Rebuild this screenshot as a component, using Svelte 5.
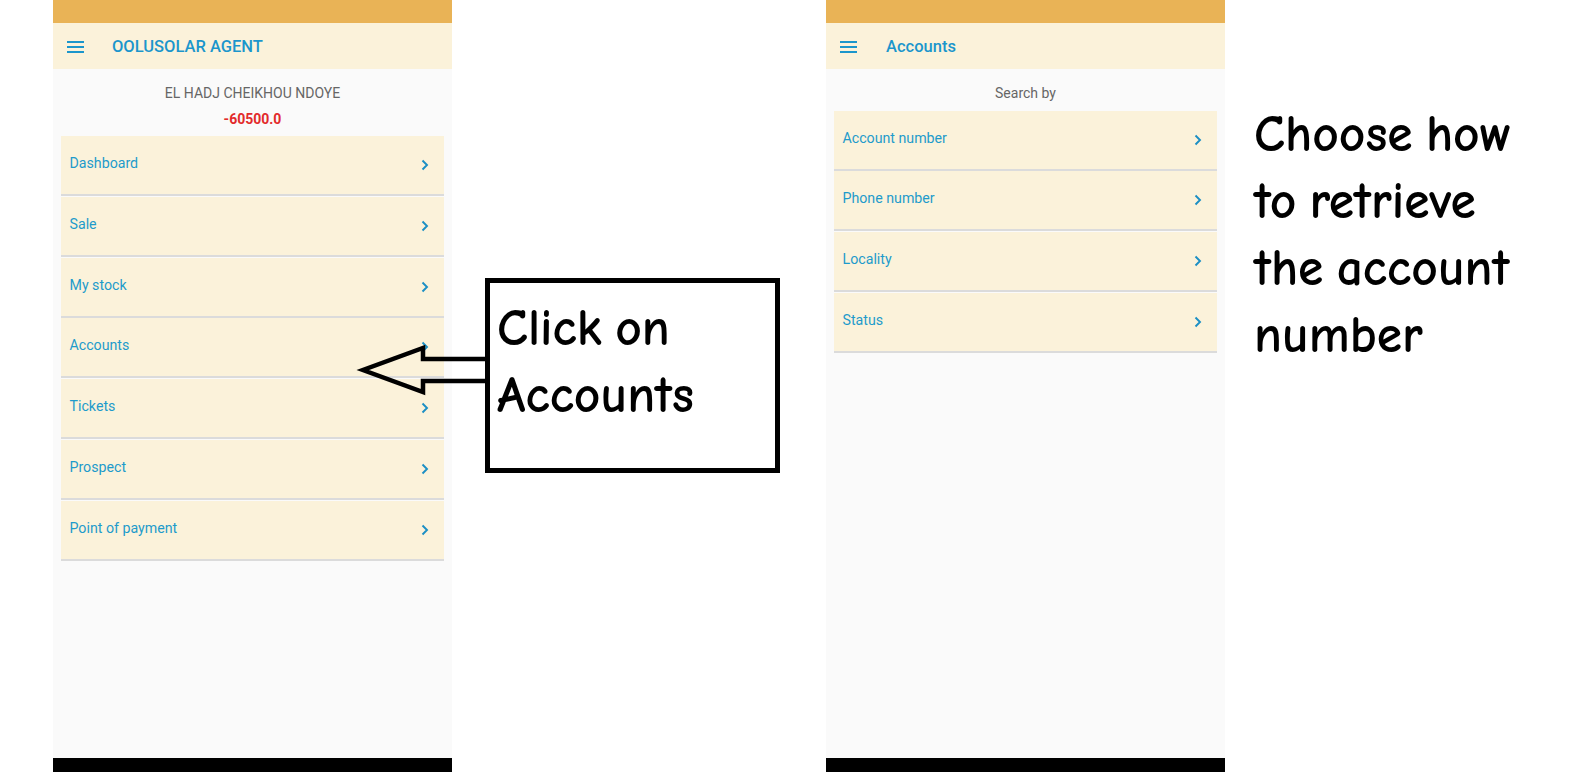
<script>
  const menu = ['Dashboard', 'Sale', 'My stock', 'Accounts', 'Tickets', 'Prospect', 'Point of payment'];
  const search = ['Account number', 'Phone number', 'Locality', 'Status'];
</script>

{#snippet hamburger()}
  <svg class="burger" width="17" height="12" viewBox="0 0 17 12">
    <path d="M0 1h17M0 6h17M0 11h17" fill="none" stroke="#1b96cc" stroke-width="1.9" />
  </svg>
{/snippet}

{#snippet row(label)}
  <div class="row">
    <span class="label">{label}</span>
    <svg class="chev" width="8" height="12" viewBox="0 0 8 12">
      <path d="M1.5 1.5 6 6l-4.500 4.500" fill="none" stroke="#1b8fc4" stroke-width="1.9" />
    </svg>
  </div>
{/snippet}

<div class="page">
  <section class="phone">
    <div class="status"></div>
    <header class="bar">{@render hamburger()}<h1>OOLUSOLAR AGENT</h1></header>
    <main class="body">
      <p class="who">EL HADJ CHEIKHOU NDOYE</p>
      <p class="balance">-60500.0</p>
      <div class="list">
        {#each menu as m}{@render row(m)}{/each}
      </div>
    </main>
    <div class="nav"></div>
  </section>

  <section class="phone second">
    <div class="status"></div>
    <header class="bar">{@render hamburger()}<h1>Accounts</h1></header>
    <main class="body">
      <p class="who">Search by</p>
      <div class="list tight">
        {#each search as s}{@render row(s)}{/each}
      </div>
    </main>
    <div class="nav"></div>
  </section>

  <p class="note">Choose how<br />to retrieve<br />the account<br />number</p>

  <!-- callout sits on top of the first phone -->
  <svg class="arrow" width="140" height="60" viewBox="0 0 140 60">
    <path d="M134 14H71V3L11 25l60 22V36H134" fill="none" stroke="#000" stroke-width="4.500" />
  </svg>
  <div class="callout">Click on<br />Accounts</div>
</div>

<style>
  :global(body) {
    margin: 0;
    background: #fff;
  }
  .page {
    position: relative;
    width: 1588px;
    height: 772px;
    display: flex;
    overflow: hidden;
    font-family: Roboto, sans-serif;
  }
  .phone {
    width: 399px;
    height: 772px;
    margin-left: 53px;
    display: flex;
    flex-direction: column;
    background: #fafafa;
  }
  .second {
    margin-left: 374px;
  }
  .status {
    height: 23px;
    background: #e9b356;
  }
  .bar {
    height: 46px;
    display: flex;
    align-items: center;
    padding-left: 14px;
    background: #fbf2da;
  }
  .burger {
    margin-right: 28px;
    margin-top: 1px;
  }
  .second .burger {
    margin-right: 29px;
  }
  h1 {
    margin: 0;
    font-size: 16.500px;
    font-weight: 500;
    color: #1b96cc;
  }
  .body {
    flex: 1;
    padding: 0 8px;
  }
  .who {
    margin: 16px 0 0;
    font-size: 14px;
    line-height: 16px;
    text-align: center;
    color: #666;
  }
  .balance {
    margin: 10px 0 0;
    font-size: 14px;
    line-height: 16px;
    font-weight: 700;
    text-align: center;
    color: #e22a2a;
  }
  .list {
    margin-top: 9px;
    display: flex;
    flex-direction: column;
    gap: 0.800px;
  }
  .tight {
    margin-top: 9.500px;
  }
  .row {
    height: 58px;
    padding: 0 15px 0 8.500px;
    display: flex;
    justify-content: space-between;
    background: #fbf2da;
    border-bottom: 2px solid #dbdbdb;
  }
  .label {
    margin-top: 19px;
    font-size: 14.200px;
    line-height: 16px;
    color: #1e9bcb;
  }
  .chev {
    margin-top: 23px;
  }
  .nav {
    height: 14px;
    background: #000;
  }
  .callout {
    position: absolute;
    left: 485px;
    top: 278px;
    width: 295px;
    height: 195px;
    box-sizing: border-box;
    border: 5px solid #000;
    background: #fff;
    padding: 12px 0 0 7px;
    font-family: "Comic Sans MS", "Comic Neue", "DejaVu Sans", cursive;
    font-size: 51.500px;
    font-weight: 700;
    line-height: 67px;
    word-spacing: -5px;
    color: #000;
  }
  .arrow {
    position: absolute;
    left: 352px;
    top: 345px;
    z-index: 1;
  }
  .note {
    position: absolute;
    left: 1254px;
    top: 101px;
    margin: 0;
    font-family: "Comic Sans MS", "Comic Neue", "DejaVu Sans", cursive;
    font-size: 51.500px;
    font-weight: 700;
    line-height: 67px;
    word-spacing: -5px;
    color: #000;
  }
</style>
